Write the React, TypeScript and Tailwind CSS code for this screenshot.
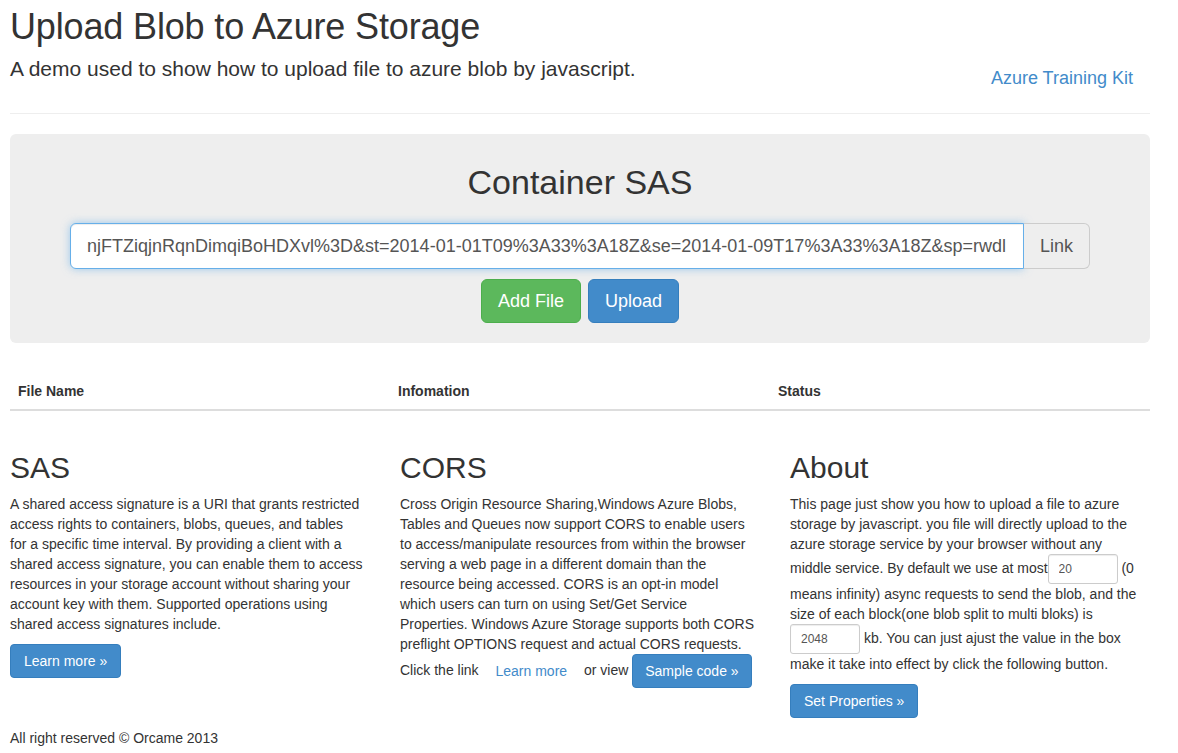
import React from "react";

const SAS_URL =
	"https://orcame.blob.core.windows.net/demo?sv=2013-08-15&sr=c&sig=k1P0a8snjFTZiqjnRqnDimqiBoHDXvl%3D&st=2014-01-01T09%3A33%3A18Z&se=2014-01-09T17%3A33%3A18Z&sp=rwdl";

function Btn({ children, wide = true }: { children: React.ReactNode; wide?: boolean }) {
	return (
		<button
			type="button"
			className={`inline-block h-[34px] rounded-[4px] border border-[#357ebd] bg-[#428bca] py-[6px] align-middle text-[14px] leading-[20px] text-white ${wide ? "px-[13px]" : "px-[12px]"}`}
		>
			{children}
		</button>
	);
}

function SmallInput({ value }: { value: string }) {
	return (
		<input
			defaultValue={value}
			className="inline-block h-[30px] w-[70px] rounded-[3px] border border-[#ccc] bg-white px-[10px] py-[5px] text-[12px] leading-[18px] text-[#555] shadow-[inset_0_1px_1px_rgba(0,0,0,0.075)] outline-none"
		/>
	);
}

export default function App() {
	return (
		<div className="min-h-[753px] bg-white font-['Liberation_Sans',Arial,sans-serif] text-[14px] leading-[20px] text-[#333]">
			<div className="ml-[10px] w-[1140px]">
				{/* header */}
				<div className="flex h-[83px] justify-between">
					<div>
						<h1 className="pt-[7px] text-[36px] font-normal leading-[40px] tracking-[-0.15px]">
							Upload Blob to Azure Storage
						</h1>
						<p className="mt-[7px] text-[21px] leading-[29px]">
							A demo used to show how to upload file to azure blob by javascript.
						</p>
					</div>
					<a href="#" className="mr-[17px] mt-[68px] self-start text-[18px] leading-[20px] text-[#428bca]">
						Azure Training Kit
					</a>
				</div>
				<hr className="mt-[30px] border-t border-[#eee]" />

				{/* jumbotron */}
				<div className="mt-[20px] rounded-[6px] bg-[#eee] pb-[20px] pt-[30px]">
					<h2 className="text-center text-[34px] font-normal leading-[37px]">Container SAS</h2>
					<div className="mx-auto mt-[22px] flex h-[46px] w-[1020px]">
						<div className="flex min-w-0 flex-1 items-center rounded-l-[6px] border border-[#66afe9] bg-white pl-[16px] pr-[17px] shadow-[inset_0_1px_1px_rgba(0,0,0,0.075),0_0_8px_rgba(102,175,233,0.6)]">
							<div className="flex min-w-0 flex-1 justify-end overflow-hidden">
								<span className="whitespace-nowrap text-[18px] leading-[24px] text-[#555]">{SAS_URL}</span>
							</div>
						</div>
						<span className="flex w-[66px] items-center justify-center rounded-r-[6px] border border-l-0 border-[#ccc] bg-[#eee] text-[18px] text-[#555]">
							Link
						</span>
					</div>
					<div className="mt-[10px] flex justify-center gap-[7px]">
						<button
							type="button"
							className="h-[44px] rounded-[6px] border border-[#4cae4c] bg-[#5cb85c] px-[16px] text-[18px] leading-[24px] text-white"
						>
							Add File
						</button>
						<button
							type="button"
							className="h-[44px] rounded-[6px] border border-[#357ebd] bg-[#428bca] px-[16px] text-[18px] leading-[24px] text-white"
						>
							Upload
						</button>
					</div>
				</div>

				{/* file table */}
				<table className="mt-[30px] w-full table-fixed border-collapse">
					<thead>
						<tr className="border-b-2 border-[#ddd] text-left">
							<th className="p-[8px] font-bold">File Name</th>
							<th className="p-[8px] font-bold">Infomation</th>
							<th className="p-[8px] font-bold">Status</th>
						</tr>
					</thead>
				</table>

				{/* info columns */}
				<div className="mt-[20px] grid grid-cols-3 gap-x-[30px]">
					<div>
						<h2 className="mt-[20px] text-[30px] font-normal leading-[33px]">SAS</h2>
						<p className="mb-[10px] mt-[10px] whitespace-nowrap">
							A shared access signature is a URI that grants restricted
							<br />
							access rights to containers, blobs, queues, and tables
							<br />
							for a specific time interval. By providing a client with a
							<br />
							shared access signature, you can enable them to access
							<br />
							resources in your storage account without sharing your
							<br />
							account key with them. Supported operations using
							<br />
							shared access signatures include.
						</p>
						<Btn>Learn more »</Btn>
					</div>
					<div>
						<h2 className="mt-[20px] text-[30px] font-normal leading-[33px]">CORS</h2>
						<p className="mb-[10px] mt-[10px] whitespace-nowrap">
							Cross Origin Resource Sharing,Windows Azure Blobs,
							<br />
							Tables and Queues now support CORS to enable users
							<br />
							to access/manipulate resources from within the browser
							<br />
							serving a web page in a different domain than the
							<br />
							resource being accessed. CORS is an opt-in model
							<br />
							which users can turn on using Set/Get Service
							<br />
							Properties. Windows Azure Storage supports both CORS
							<br />
							preflight OPTIONS request and actual CORS requests.
							<br />
							Click the link{" "}
							<a
								href="#"
								className="inline-block h-[34px] border border-transparent px-[12px] py-[6px] align-middle leading-[20px] text-[#428bca]"
							>
								Learn more
							</a>{" "}
							or view <Btn wide={false}>Sample code »</Btn>
						</p>
					</div>
					<div>
						<h2 className="mt-[20px] text-[30px] font-normal leading-[33px]">About</h2>
						<p className="mb-[10px] mt-[10px] whitespace-nowrap">
							This page just show you how to upload a file to azure
							<br />
							storage by javascript. you file will directly upload to the
							<br />
							azure storage service by your browser without any
							<br />
							middle service. By default we use at most
							<SmallInput value="20" /> (0
							<br />
							means infinity) async requests to send the blob, and the
							<br />
							size of each block(one blob split to multi bloks) is
							<br />
							<SmallInput value="2048" /> kb. You can just ajust the value in the box
							<br />
							make it take into effect by click the following button.
						</p>
						<Btn>Set Properties »</Btn>
					</div>
				</div>

				<p className="mt-[10px]">All right reserved © Orcame 2013</p>
			</div>
		</div>
	);
}
